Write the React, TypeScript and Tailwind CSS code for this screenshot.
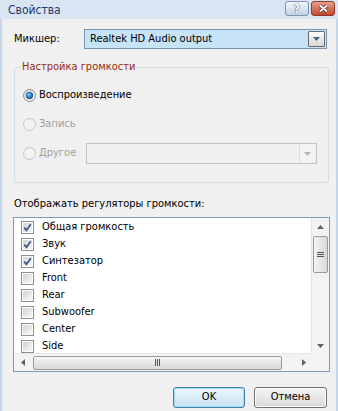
import type { ReactNode } from 'react'

const channels = [
  { label: 'Общая громкость', checked: true },
  { label: 'Звук', checked: true },
  { label: 'Синтезатор', checked: true },
  { label: 'Front', checked: false },
  { label: 'Rear', checked: false },
  { label: 'Subwoofer', checked: false },
  { label: 'Center', checked: false },
  { label: 'Side', checked: false },
]

function Radio({ checked, disabled }: { checked?: boolean; disabled?: boolean }) {
  return (
    <svg width="13" height="13" viewBox="0 0 13 13" className="shrink-0">
      <defs>
        <linearGradient id="rg" x1="0" y1="0" x2="1" y2="1">
          <stop offset="0" stopColor="#d6d6d6" />
          <stop offset="1" stopColor="#ffffff" />
        </linearGradient>
        <radialGradient id="dot" cx="0.4" cy="0.35" r="0.7">
          <stop offset="0" stopColor="#8fd3ff" />
          <stop offset="0.5" stopColor="#2a8ad6" />
          <stop offset="1" stopColor="#0b4f95" />
        </radialGradient>
      </defs>
      <circle
        cx="6.5"
        cy="6.5"
        r="6"
        fill={disabled ? '#f2f2f2' : 'url(#rg)'}
        stroke={disabled ? '#c4c4c4' : '#8c8c8c'}
      />
      {checked && <circle cx="6.5" cy="6.5" r="3.4" fill="url(#dot)" stroke="#1b4a7d" strokeWidth="0.6" />}
    </svg>
  )
}

function Check({ checked }: { checked: boolean }) {
  return (
    <svg width="13" height="13" viewBox="0 0 13 13" className="shrink-0">
      <defs>
        <linearGradient id="cb" x1="0" y1="0" x2="1" y2="1">
          <stop offset="0" stopColor="#d2d2d2" />
          <stop offset="1" stopColor="#f8f8f8" />
        </linearGradient>
      </defs>
      <rect x="0.5" y="0.5" width="12" height="12" fill="#fff" stroke="#8e8f8f" />
      <rect x="2" y="2" width="9" height="9" fill="url(#cb)" />
      {checked && (
        <path d="M3.2 6.6 L5.4 9.2 L9.8 3.2" fill="none" stroke="#3f5890" strokeWidth="1.8" />
      )}
    </svg>
  )
}

function Arrow({ dir, color = '#4a5d82' }: { dir: 'up' | 'down' | 'left' | 'right'; color?: string }) {
  const pts = {
    down: '0,0 7,0 3.5,4',
    up: '0,4 7,4 3.5,0',
    left: '4,0 4,7 0,3.5',
    right: '0,0 0,7 4,3.5',
  }[dir]
  const w = dir === 'up' || dir === 'down' ? 7 : 4
  const h = dir === 'up' || dir === 'down' ? 4 : 7
  return (
    <svg width={w} height={h} viewBox={`0 0 ${w} ${h}`}>
      <polygon points={pts} fill={color} />
    </svg>
  )
}

function DropButton({ disabled }: { disabled?: boolean }) {
  return (
    <div
      className={
        disabled
          ? 'w-[16px] m-[1px] flex items-center justify-center border-l border-[#dcdcdc] bg-[#f4f4f4]'
          : 'w-[17px] m-[1px] flex items-center justify-center border border-[#6a6a6a] rounded-[1px] bg-gradient-to-b from-[#fdfdfd] to-[#d6d6d6]'
      }
    >
      <Arrow dir="down" color={disabled ? '#b8b8b8' : '#4a5d82'} />
    </div>
  )
}

function Thumb({ vertical }: { vertical?: boolean }) {
  return (
    <div
      className={
        vertical
          ? 'h-[37px] w-[15px] mx-auto mt-[1px] rounded-[2px] border border-[#9b9b9b] bg-gradient-to-r from-[#f5f5f5] to-[#d9d9d9] flex flex-col items-center justify-center gap-[1px]'
          : 'w-[249px] h-[14px] ml-[2px] my-auto rounded-[2px] border border-[#9b9b9b] bg-gradient-to-b from-[#f5f5f5] to-[#d9d9d9] flex items-center justify-center gap-[1px]'
      }
    >
      {[0, 1, 2].map((i) => (
        <span
          key={i}
          className={vertical ? 'block w-[7px] h-[1px] bg-[#555]' : 'block w-[1px] h-[7px] bg-[#555]'}
        />
      ))}
    </div>
  )
}

function TitleButton({ children, red }: { children: ReactNode; red?: boolean }) {
  return (
    <div
      className={
        red
          ? 'w-[24px] h-[15px] rounded-[3px] border border-[#8c3a2a] bg-gradient-to-b from-[#e6a08c] to-[#c1452c] flex items-center justify-center'
          : 'w-[24px] h-[15px] rounded-[3px] border border-[#7c94b4] bg-gradient-to-b from-[#f2f6fb] to-[#c3d3e6] flex items-center justify-center'
      }
    >
      {children}
    </div>
  )
}

export default function App() {
  return (
    <div
      className="w-[338px] h-[411px] overflow-hidden flex flex-col bg-[#f0f0f0] text-[11px] text-black"
      style={{ fontFamily: '"DejaVu Sans Condensed", "Liberation Sans", sans-serif' }}
    >
      <div className="h-[19px] shrink-0 flex items-center bg-[#d9e5f2] pl-[8px] pr-[3px]">
        <span className="text-[12px] text-[#1c3b6d] flex-1">Свойства</span>
        <div className="flex gap-[2px] mt-[-2px]">
          <TitleButton>
            <span className="text-[12px] font-bold leading-none text-white [text-shadow:0_0_1px_#35486a,0_0_1px_#35486a]">
              ?
            </span>
          </TitleButton>
          <TitleButton red>
            <svg width="11" height="9" viewBox="0 0 11 9">
              <path d="M2 1.5 L9 7.5 M9 1.5 L2 7.5" stroke="#5b2418" strokeWidth="3.4" />
              <path d="M2 1.5 L9 7.5 M9 1.5 L2 7.5" stroke="#ffffff" strokeWidth="1.8" />
            </svg>
          </TitleButton>
        </div>
      </div>

      <div className="flex-1 flex flex-col border-x-2 border-[#c6d7eb] pl-[11px] pr-[6px]">
        <div className="mt-[10px] flex items-center">
          <span className="w-[70px] ml-[1px]">Микшер:</span>
          <div className="flex-1 mr-[3px] h-[20px] flex border border-[#7a94b2] bg-[#c6e3f7]">
            <span className="flex-1 self-center pl-[5px]">Realtek HD Audio output</span>
            <DropButton />
          </div>
        </div>

        <div className="relative mt-[18px] mx-[1px] h-[116px] border border-[#d3dde6] rounded-[3px] pt-[17px] pl-[8px]">
          <span className="absolute -top-[8px] left-[6px] px-[1px] bg-[#f0f0f0] text-[#9a2c0c] leading-[14px]">
            Настройка громкости
          </span>
          <div className="flex flex-col gap-[8px]">
            <div className="h-[21px] flex items-center gap-[3px]">
              <Radio checked />
              <span>Воспроизведение</span>
            </div>
            <div className="h-[21px] flex items-center gap-[3px] text-[#a0a0a0]">
              <Radio disabled />
              <span>Запись</span>
            </div>
            <div className="h-[21px] flex items-center text-[#a0a0a0]">
              <Radio disabled />
              <span className="ml-[3px] w-[47px]">Другое</span>
              <div className="w-[231px] h-[21px] flex border border-[#c2c2c2] bg-[#f0f0f0]">
                <span className="flex-1" />
                <DropButton disabled />
              </div>
            </div>
          </div>
        </div>

        <div className="mt-[14px] ml-[1px] leading-[14px]">Отображать регуляторы громкости:</div>

        <div className="mt-[6px] h-[155px] flex flex-col border border-[#7f9ab8] bg-white">
          <div className="h-[136px] flex">
            <div className="flex-1 overflow-hidden pt-[1px] pl-[7px] border-r border-b border-[#e6e6e6]">
              {channels.map((c) => (
                <div key={c.label} className="h-[17px] flex items-center gap-[8px] whitespace-nowrap">
                  <Check checked={c.checked} />
                  <span>{c.label}</span>
                </div>
              ))}
            </div>
            <div className="w-[17px] flex flex-col bg-[#f3f3f3]">
              <div className="h-[17px] flex items-center justify-center">
                <Arrow dir="up" color="#606060" />
              </div>
              <Thumb vertical />
              <div className="flex-1" />
              <div className="h-[17px] flex items-center justify-center">
                <Arrow dir="down" color="#606060" />
              </div>
            </div>
          </div>
          <div className="flex-1 flex bg-[#f3f3f3]">
            <div className="w-[17px] flex items-center justify-center">
              <Arrow dir="left" color="#606060" />
            </div>
            <Thumb />
            <div className="flex-1" />
            <div className="w-[17px] flex items-center justify-center">
              <Arrow dir="right" color="#606060" />
            </div>
            <div className="w-[17px]" />
          </div>
        </div>

        <div className="mt-[15px] mr-[3px] flex justify-end gap-[9px]">
          <button className="w-[72px] h-[21px] rounded-[3px] border border-[#3c7fb1] bg-gradient-to-b from-[#eaf6fd] to-[#c8e2f3] shadow-[inset_0_0_0_1px_#a7d9f5]">
            OK
          </button>
          <button className="w-[73px] h-[21px] rounded-[3px] border border-[#707070] bg-gradient-to-b from-[#f5f5f5] to-[#dadada] shadow-[inset_0_0_0_1px_#fcfcfc]">
            Отмена
          </button>
        </div>
      </div>
    </div>
  )
}
